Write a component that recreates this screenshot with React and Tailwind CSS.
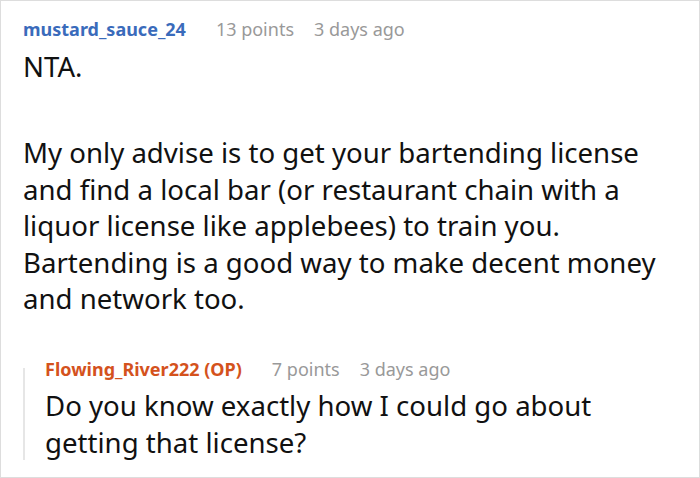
export default function App() {
  return (
    <div className="w-[700px] h-[478px] bg-white border border-[#dddddd] overflow-hidden font-['Noto_Sans',sans-serif]">
      <div className="pl-[22px] pr-[8px] pt-[15px]">
        <div className="flex items-baseline text-[18px] leading-[26px]">
          <span className="font-bold text-[#3a6bbb]">mustard_sauce_24</span>
          <span className="ml-[30px] text-[#999999]">13 points</span>
          <span className="ml-[20px] text-[#999999]">3 days ago</span>
        </div>
        <div className="text-[27.6px] leading-[36.5px] text-[#111111] mt-[6px]">
          <p>NTA.</p>
          <p className="mt-[49.5px]">
            My only advise is to get your bartending license<br />
            and find a local bar (or restaurant chain with a<br />
            liquor license like applebees) to train you.<br />
            Bartending is a good way to make decent money<br />
            and network too.
          </p>
        </div>
        <div className="mt-[39.5px] flex">
          <div className="w-[2px] bg-[#e6e6e6] mt-[12px] mb-[1px]" />
          <div className="pl-[20px]">
            <div className="flex items-baseline text-[18px] leading-[26px]">
              <span className="font-bold text-[#d4521d]">Flowing_River222 (OP)</span>
              <span className="ml-[30px] text-[#999999]">7 points</span>
              <span className="ml-[20px] text-[#999999]">3 days ago</span>
            </div>
            <p className="text-[27.6px] leading-[37px] text-[#111111] mt-[5px]">
              Do you know exactly how I could go about<br />
              getting that license?
            </p>
          </div>
        </div>
      </div>
    </div>
  );
}
